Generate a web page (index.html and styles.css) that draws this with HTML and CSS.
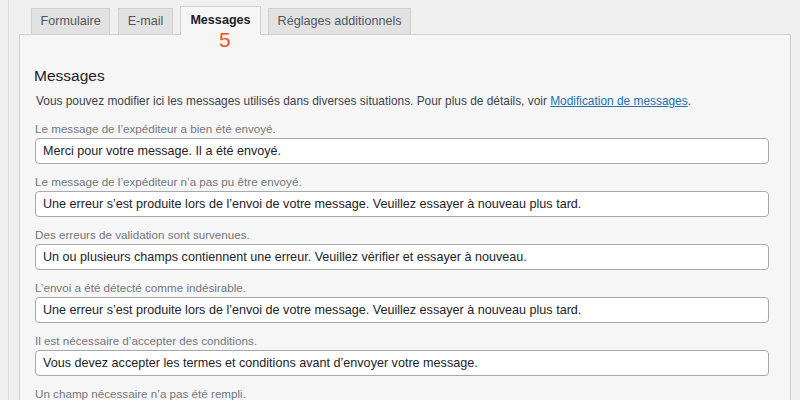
FILE: index.html
```html
<!DOCTYPE html>
<html lang="fr">
<head>
  <meta charset="UTF-8">
  <title>Messages</title>
  <link rel="stylesheet" href="styles.css">
</head>
<body>

<div class="wrap">
  <nav class="tabs">
    <a class="tab" href="#">Formulaire</a>
    <a class="tab" href="#">E-mail</a>
    <a class="tab active" href="#">Messages<span class="step">5</span></a>
    <a class="tab" href="#">Réglages additionnels</a>
  </nav>

  <div class="panel">
    <h2>Messages</h2>
    <p class="intro">Vous pouvez modifier ici les messages utilisés dans diverses situations. Pour plus de détails, voir <a href="#">Modification de messages</a>.</p>

    <div class="field">
      <label>Le message de l’expéditeur a bien été envoyé.</label>
      <input type="text" value="Merci pour votre message. Il a été envoyé.">
    </div>
    <div class="field">
      <label>Le message de l’expéditeur n’a pas pu être envoyé.</label>
      <input type="text" value="Une erreur s’est produite lors de l’envoi de votre message. Veuillez essayer à nouveau plus tard.">
    </div>
    <div class="field">
      <label>Des erreurs de validation sont survenues.</label>
      <input type="text" value="Un ou plusieurs champs contiennent une erreur. Veuillez vérifier et essayer à nouveau.">
    </div>
    <div class="field">
      <label>L’envoi a été détecté comme indésirable.</label>
      <input type="text" value="Une erreur s’est produite lors de l’envoi de votre message. Veuillez essayer à nouveau plus tard.">
    </div>
    <div class="field">
      <label>Il est nécessaire d’accepter des conditions.</label>
      <input type="text" value="Vous devez accepter les termes et conditions avant d’envoyer votre message.">
    </div>
    <div class="field">
      <label>Un champ nécessaire n’a pas été rempli.</label>
      <input type="text" value="Veuillez remplir ce champ.">
    </div>
  </div>
</div>

</body>
</html>
```

FILE: styles.css
```css
html, body {
  margin: 0;
  height: 100%;
  overflow: hidden;
}
body {
  font-family: "Liberation Sans", Arial, sans-serif;
  background-color: #f0f0f1;
  color: #3c434a;
}
.wrap {
  margin-left: 8px;
  border-left: 1px solid #dcdcde;
  padding: 7px 9px 0 10px;
  min-height: 100%;
  box-sizing: border-box;
}
.tabs {
  display: flex;
  align-items: flex-end;
  gap: 7px;
  padding-left: 12px;
  height: 27px;
}
.tab {
  position: relative;
  display: block;
  height: 25px;
  line-height: 25px;
  padding: 0 8.5px;
  font-size: 12.6px;
  color: #50575e;
  text-decoration: none;
  background-color: #e2e2e2;
  border: 1px solid #d0d0d0;
  border-bottom: none;
}
.tab:first-child {
  margin-right: 1px;
}
.tab.active {
  height: 28px;
  line-height: 27px;
  margin-bottom: -1px;
  padding: 0 9.5px;
  font-weight: bold;
  color: #1d2327;
  background-color: #f6f6f6;
  z-index: 1;
}
.step {
  position: absolute;
  left: 38px;
  top: 22px;
  font-size: 21px;
  font-weight: normal;
  line-height: 21px;
  color: #f4511e;
}
.panel {
  background-color: #f6f6f6;
  border: 1px solid #d0d0d0;
  padding: 31px 21px 20px 14px;
  min-height: 400px;
}
h2 {
  margin: 0 0 6px;
  font-size: 15.5px;
  font-weight: normal;
  line-height: 20px;
  color: #1d2327;
}
.intro {
  margin: 0 0 10px 2px;
  font-size: 11.9px;
  line-height: 18px;
}
.intro a {
  color: #2271b1;
}
.field {
  padding-left: 1px;
  margin-bottom: 9px;
}
.field label {
  display: block;
  font-size: 11.65px;
  line-height: 18px;
  color: #72777c;
}
.field input {
  display: block;
  width: 100%;
  box-sizing: border-box;
  height: 26px;
  padding: 0 7px;
  font-family: inherit;
  font-size: 12.6px;
  color: #1d2327;
  background-color: #fff;
  border: 1px solid #a7aaad;
  border-radius: 4px;
}
```
